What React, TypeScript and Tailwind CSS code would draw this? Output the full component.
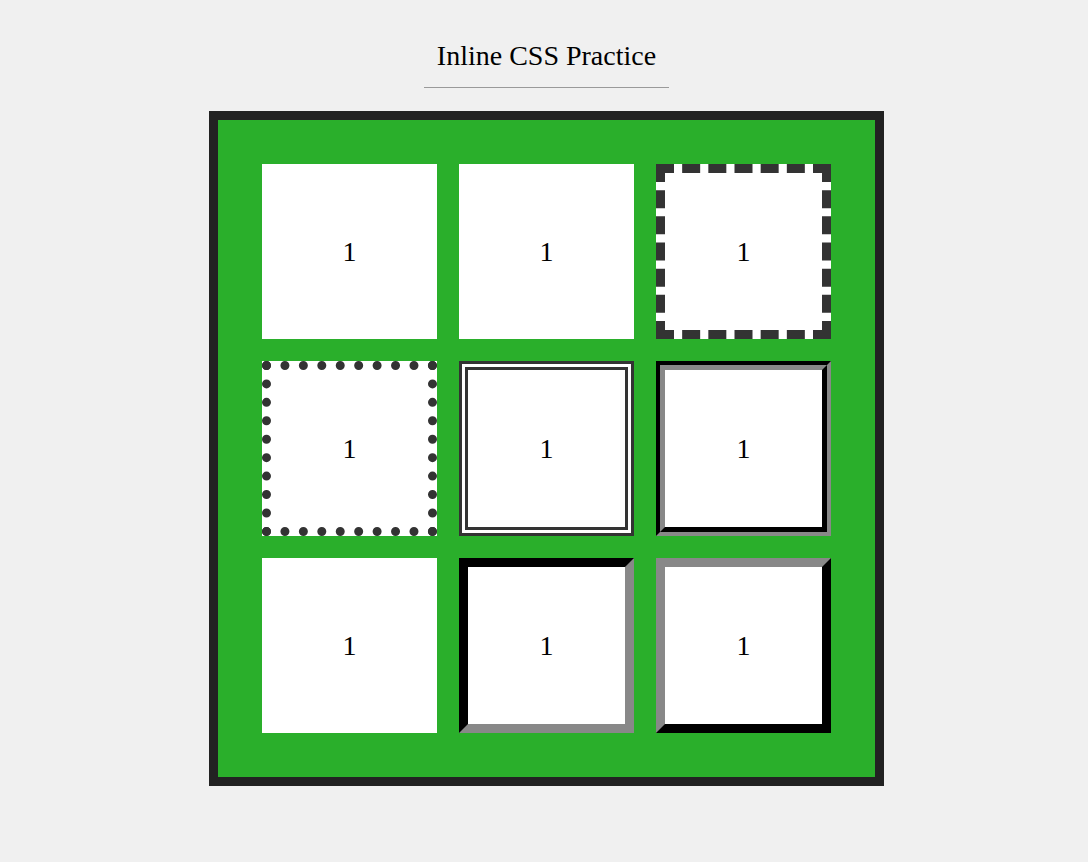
const boxes: string[] = [
  "",
  "",
  "border-[9px] border-dashed border-[#333]",
  "border-[9px] border-dotted border-[#333]",
  "border-[9px] border-double border-[#333]",
  "groove",
  "",
  "border-[9px] border-t-black border-l-black border-r-[#888] border-b-[#888]",
  "border-[9px] border-t-[#888] border-l-[#888] border-r-black border-b-black",
];

export default function App() {
  return (
    <div className="min-h-[862px] w-full bg-[#f0f0f0] font-['Liberation_Serif','Times_New_Roman',serif] text-black">
      <div className="flex flex-col items-center pt-[40px] pl-[5px]">
        <h1 className="text-[28px] leading-[32px] font-normal">Inline CSS Practice</h1>
        <div className="mt-[15px] w-[245px] border-t border-[#9a9a9a]" />

        {/* grid of boxes */}
        <div className="mt-[23px] border-[9px] border-[#222] bg-[#2aaf2b] p-[44px]">
          <div className="grid grid-cols-[repeat(3,175px)] gap-[22px]">
            {boxes.map((b, i) =>
              b === "groove" ? (
                <div
                  key={i}
                  className="h-[175px] w-[175px] border-[4px] border-t-black border-l-black border-r-[#888] border-b-[#888]"
                >
                  <div className="flex h-full w-full items-center justify-center border-[5px] border-t-[#888] border-l-[#888] border-r-black border-b-black bg-white text-[28px] leading-none">
                    1
                  </div>
                </div>
              ) : (
                <div
                  key={i}
                  className={`flex h-[175px] w-[175px] items-center justify-center bg-white text-[28px] leading-none ${b}`}
                >
                  1
                </div>
              )
            )}
          </div>
        </div>
      </div>
    </div>
  );
}
